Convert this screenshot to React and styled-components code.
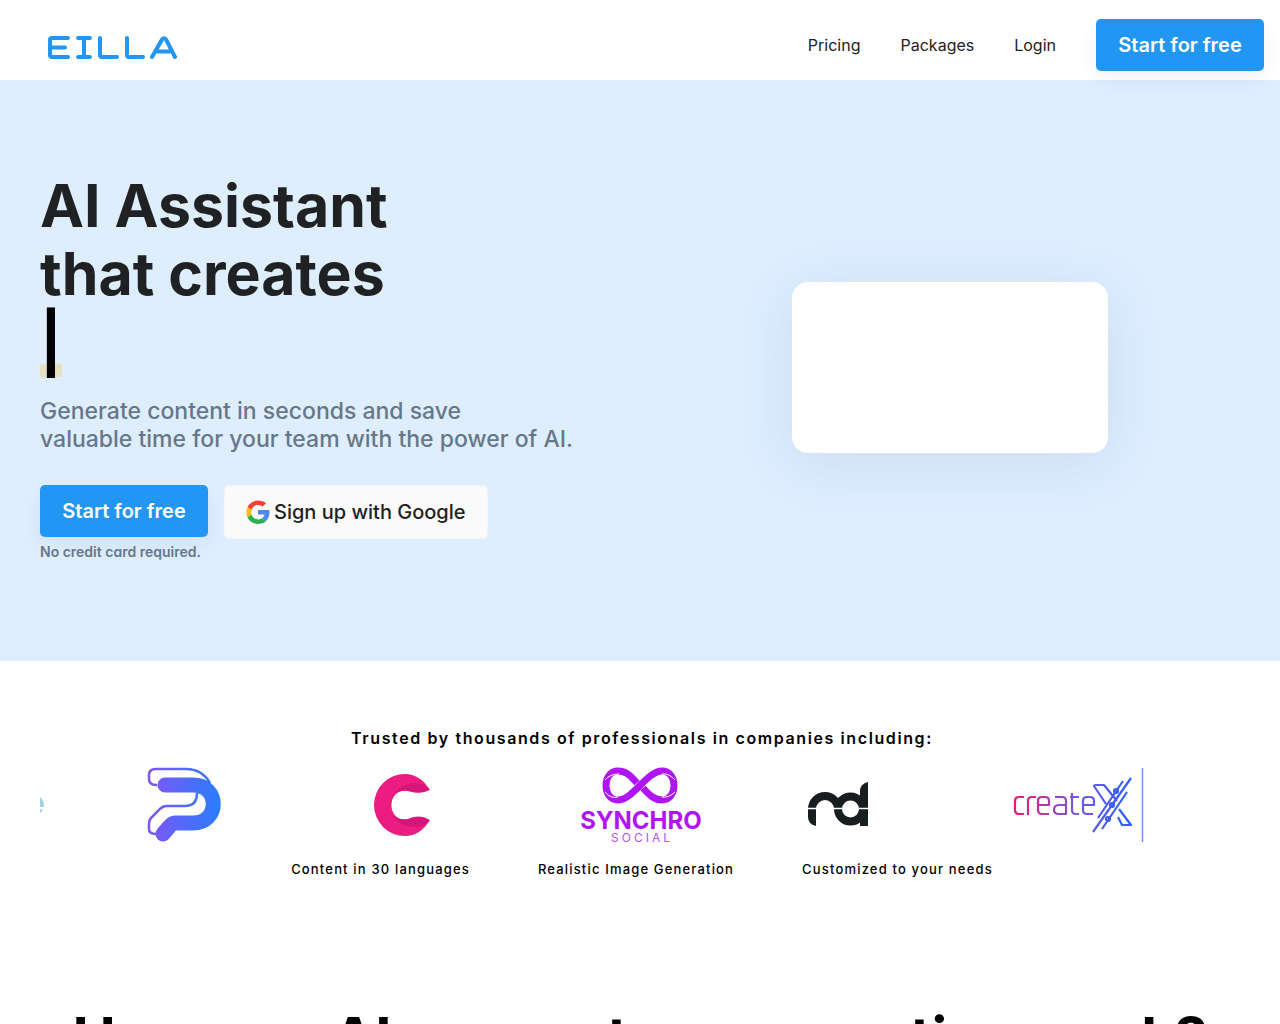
import React from 'react';
import styled, { createGlobalStyle } from 'styled-components';

const Global = createGlobalStyle`
  * { box-sizing: border-box; }
  body { margin: 0; background: #fff; color: #000; font-family: Inter, sans-serif; font-optical-sizing: none; }
  h1, h2, p { margin: 0; }
`;

const Header = styled.header`
  height: 80px;
  padding: 0 16px 0 48px;
  display: flex;
  align-items: center;
  justify-content: space-between;
  position: relative;
  z-index: 1;
`;

const HomeLink = styled.a`
  display: flex;
  padding-top: 16px;
`;

const Nav = styled.nav`
  display: flex;
  align-items: center;
  gap: 40px;
  padding-top: 9px;
`;

const NavLink = styled.a`
  color: #1f2122;
  font-size: 16px;
  line-height: 24px;
  text-decoration: none;
`;

const Button = styled.button`
  height: 52px;
  min-width: 168px;
  padding: 0 22px;
  border: 0;
  border-radius: 5px;
  background: #2196f3;
  color: #fff;
  font: 600 20px/24px Inter, sans-serif;
  box-shadow: 0 8px 20px rgba(40, 40, 80, 0.06);
  cursor: pointer;
`;

const GoogleButton = styled(Button)`
  height: 54px;
  display: flex;
  align-items: center;
  gap: 4px;
  background: #fafafa;
  color: #1f2122;
  font-weight: 500;
  border: 1px solid #f3f5f9;
  padding: 0 21px;
  box-shadow: none;
`;

const Hero = styled.section`
  background: #deeeff;
  padding: 92px 40px 99px;
  display: grid;
  grid-template-columns: 31fr 29fr;
  align-items: center;
`;

const Title = styled.h1`
  color: #1f2122;
  font-size: 59px;
  line-height: 68px;
  font-weight: 700;
`;

const Typed = styled.div`
  height: 74px;
  font-size: 59px;
  line-height: 69px;
  font-weight: 700;
`;

const Caret = styled.span`
  display: inline-block;
  color: #000;
  background: linear-gradient(transparent 56px, #e8dfc1 56px);
`;

const Lead = styled.p`
  padding-top: 15px;
  color: #667789;
  font-size: 23px;
  line-height: 28px;
  font-weight: 500;
`;

const Actions = styled.div`
  display: flex;
  align-items: flex-start;
  gap: 16px;
  padding-top: 32px;
`;

const Note = styled.p`
  padding-top: 5px;
  color: #667789;
  font-size: 14px;
  line-height: 20px;
  font-weight: 600;
  font-feature-settings: "cv11";
`;

const Preview = styled.div`
  width: 316px;
  height: 171px;
  justify-self: center;
  border-radius: 16px;
  background: #fff;
  box-shadow: 0 10px 60px rgba(50, 80, 120, 0.11);
`;

const Trusted = styled.section`
  padding: 65px 36px 0 40px;
  text-align: center;
`;

const TrustedTitle = styled.h2`
  font-size: 16px;
  line-height: 24px;
  font-weight: 600;
  letter-spacing: 0.1em;
`;

const Logos = styled.div`
  display: grid;
  grid-template-columns: 107px 226px 206px 228px 206px 132px;
  height: 96px;
  margin-top: 7px;
  overflow: hidden;
  align-items: center;
  justify-items: start;
`;

const Features = styled.ul`
  display: flex;
  justify-content: center;
  gap: 68px;
  margin: 4px 0 0;
  padding: 0;
  list-style: none;
  font-size: 13px;
  line-height: 24px;
  font-weight: 500;
  letter-spacing: 0.09em;
`;

const Support = styled.section`
  padding: 121px 40px 40px;
  text-align: center;
`;

const SupportTitle = styled.h2`
  font-size: 58px;
  line-height: 72px;
  font-weight: 700;
`;

export default function App() {
  return (
    <>
      <Global />
      <Header>
        <HomeLink href="#"><BrandLogo /></HomeLink>
        <Nav>
          <NavLink href="#">Pricing</NavLink>
          <NavLink href="#">Packages</NavLink>
          <NavLink href="#">Login</NavLink>
          <Button>Start for free</Button>
        </Nav>
      </Header>
      <main>
        <Hero>
          <div>
            <Title>AI Assistant<br />that creates</Title>
            <Typed><Caret>|</Caret></Typed>
            <Lead>Generate content in seconds and save<br />valuable time for your team with the power of AI.</Lead>
            <Actions>
              <div>
                <Button>Start for free</Button>
                <Note>No credit card required.</Note>
              </div>
              <GoogleButton><GoogleIcon />Sign up with Google</GoogleButton>
            </Actions>
          </div>
          <Preview />
        </Hero>
        <Trusted>
          <TrustedTitle>Trusted by thousands of professionals in companies including:</TrustedTitle>
          <Logos>
            <PartialLogo />
            <PLogo />
            <CLogo />
            <SynchroLogo />
            <NdLogo />
            <CreatexLogo />
          </Logos>
          <Features>
            <li>Content in 30 languages</li>
            <li>Realistic Image Generation</li>
            <li>Customized to your needs</li>
          </Features>
        </Trusted>
        <Support>
          <SupportTitle>How can AI support your creation work?</SupportTitle>
        </Support>
      </main>
    </>
  );
}

function BrandLogo() {
  return (
    <svg width="129" height="24" viewBox="0 0 129 24" fill="none" stroke="#2196f3" strokeWidth="4" strokeLinecap="round" strokeLinejoin="round" aria-label="Eilla">
      <path d="M20 2H4Q2 2 2 4V19Q2 21 4 21H20M2 11.5H17M30 2H42M36 2V21M30 21H42M52 2V19Q52 21 54 21H69M79 2V19Q79 21 81 21H95M104 21L114 3.500Q116 1 118 3.500L127 21M108 15.500H123" />
    </svg>
  );
}

function GoogleIcon() {
  return (
    <svg width="24" height="24" viewBox="0 0 48 48" aria-hidden="true">
      <path fill="#f44336" d="M24 10c4 0 7 1.500 9 3.500l7-7C36 3 30.500 1 24 1 15 1 7 6 3 14l8 6c2-6 7-10 13-10" />
      <path fill="#4c8bf5" d="M47 24.500c0-2-.2-3-.5-4.500H24v9h13c-.6 3-2.500 5.500-5 7.500l7.500 6c5-4.500 7.500-11 7.500-18" />
      <path fill="#fbbc05" d="M11 29c-1-3-1-6 0-9l-8-6C0 20 0 28 3 35z" />
      <path fill="#2bb24c" d="M24 48c6.500 0 12-2 16-5.500l-8-6c-7 5-18 2-21-7.500l-8 6c4 8 12 13 21 13" />
    </svg>
  );
}

function PartialLogo() {
  return (
    <svg width="26" height="76" viewBox="0 0 26 76" aria-hidden="true">
      <path fill="#9dd0e4" d="M0 30Q4 33 4 40H0zM0 42L3 43 0 46z" />
    </svg>
  );
}

function PLogo() {
  return (
    <svg width="76" height="76" viewBox="0 -1 76 76" fill="none" aria-hidden="true">
      <defs><linearGradient id="pGradient" gradientUnits="userSpaceOnUse" x1="0" y1="0" x2="76" y2="0"><stop stopColor="#8055f6" /><stop offset="1" stopColor="#267fff" /></linearGradient></defs>
      <g stroke="url(#pGradient)">
        <path strokeWidth="2.500" d="M10 17H9Q2 17 2 11V7Q2 1 9 1H39Q55 1 63 15M50 25Q50 38 38 38H20Q15 38 11 43L4 50Q2 52 2 56V61Q2 66 9 66" />
        <path strokeWidth="15" strokeLinecap="round" strokeLinejoin="round" d="M18 17H46C73 17 73 55 46 55H28Q25 55 22 59L16 66" />
      </g>
    </svg>
  );
}

function CLogo() {
  return (
    <svg width="58" height="64" viewBox="0 0 58 64" aria-hidden="true">
      <path fill="#ed1c80" d="M57 17C50 6 42 1 32 1A31 31 0 1 0 32 63C42 63 50 58 57 47C49 42 41 43 35 46C13 50 13 14 35 18Q47 22 57 17" />
      <path fill="#d51678" d="M18 24Q28 10 42 10Q50 10 56 16Q49 22 36 18Q25 16 18 24M18 42Q28 54 42 54Q51 54 56 48Q48 41 36 46Q25 48 18 42" />
    </svg>
  );
}

function SynchroLogo() {
  return (
    <svg width="124" height="80" viewBox="0 0 124 80" fill="none" aria-label="Synchro Social">
      <g transform="translate(0 2)">
        <path stroke="#b016f5" strokeWidth="7" d="M58 16C50 7 46 4 39 4C23 4 23 33 39 33C54 33 68 4 83 4C99 4 99 33 83 33C76 33 71 29 64 21" />
        <path stroke="#fff" strokeWidth="1" d="M26 13Q31 7 40 7M26 25Q32 32 39 30M96 13Q90 6 83 7M96 25Q90 31 83 30" />
      </g>
      <text x="62" y="64" textAnchor="middle" fill="#b016f5" fontFamily="Inter, sans-serif" fontWeight="700" fontSize="24">SYNCHRO</text>
      <text x="63" y="77" textAnchor="middle" fill="#b850f4" fontFamily="Inter, sans-serif" fontSize="12" letterSpacing="3">SOCIAL</text>
    </svg>
  );
}

function NdLogo() {
  return (
    <svg width="62" height="48" viewBox="0 0 62 48" fill="none" aria-hidden="true">
      <path stroke="#181d20" strokeWidth="8" d="M5 28A13 13 0 0 1 31 28" />
      <circle cx="43.5" cy="28" r="12.5" stroke="#181d20" strokeWidth="8" />
      <path fill="#181d20" d="M1 27H9V45Q1 43 1 36zM53 28V10Q53 3 61 1V45H53z" />
      <path stroke="#fff" strokeWidth="1.500" d="M0 27.500H62" />
    </svg>
  );
}

function CreatexLogo() {
  return (
    <svg width="132" height="76" viewBox="0 0 132 76" fill="none" aria-label="createX">
      <defs><linearGradient id="xGradient" gradientUnits="userSpaceOnUse" x1="0" y1="0" x2="110" y2="0"><stop stopColor="#ef1769" /><stop offset=".6" stopColor="#705be6" /><stop offset="1" stopColor="#345eff" /></linearGradient></defs>
      <g stroke="url(#xGradient)" strokeWidth="2.200" strokeLinejoin="round">
        <path d="M11 30H6Q2 30 2 34V43Q2 47 6 47H11M15 48V34Q15 30 19 30H23M36 47H29Q25 47 25 43V34Q25 30 29 30H32Q36 30 36 34V38H25M42 30H49Q53 30 53 34V47H46Q41 47 41 43Q41 38 46 38H53M59 26V43Q59 47 63 47H66M57 30H66M80 47H74Q70 47 70 43V34Q70 30 74 30H77Q81 30 81 34V38H70" />
        <path d="M93 37L81 19Q81 18 83 18H91L104 34M105 50L109 58H118L106 42M85 51L110 14M80 65L118 11M89 62L114 25" />
        <circle cx="103" cy="24" r="2" /><circle cx="99" cy="38" r="2" /><circle cx="95" cy="52" r="2" />
      </g>
      <path stroke="#6996ff" strokeWidth="1.500" d="M129.500 1V75" />
    </svg>
  );
}
